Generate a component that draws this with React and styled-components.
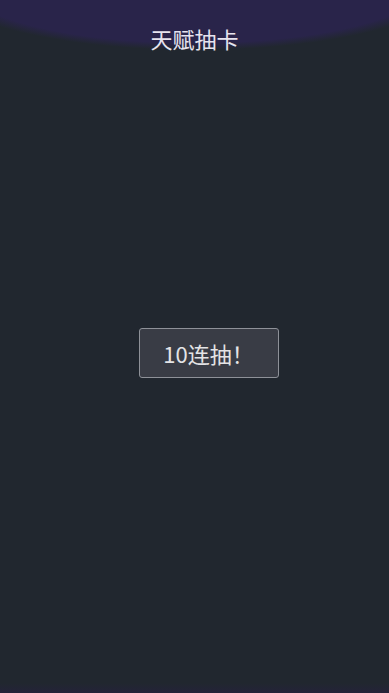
import styled, { createGlobalStyle } from 'styled-components';

const GlobalStyle = createGlobalStyle`
  html, body {
    margin: 0;
    padding: 0;
    height: 100%;
    background: #21272f;
  }
  #root {
    height: 100%;
  }
`;

const TalentDraw = () => {
  return (
    <S.Page>
      <GlobalStyle />
      <S.Header>
        <S.Title>天赋抽卡</S.Title>
      </S.Header>
      <S.Main>
        <S.DrawButton type="button">10连抽！</S.DrawButton>
      </S.Main>
    </S.Page>
  );
};

export default TalentDraw;

const S = {
  Page: styled.div`
    display: flex;
    flex-direction: column;
    min-height: 100vh;
    font-family: 'Noto Sans CJK SC', 'Noto Sans', sans-serif;
    background:
      radial-gradient(ellipse 262px 70px at 50% -20px, #29244a 90%, rgba(41, 36, 74, 0) 100%),
      linear-gradient(to top, #242339 0px, rgba(36, 35, 57, 0) 10px),
      #21272f;
  `,
  Header: styled.header`
    height: 78px;
    padding-top: 24px;
    box-sizing: border-box;
    display: flex;
    justify-content: center;
  `,
  Title: styled.h1`
    margin: 0;
    font-size: 22px;
    line-height: 28px;
    font-weight: 400;
    color: #e6e3ee;
  `,
  Main: styled.main`
    flex: 1;
    display: flex;
    align-items: center;
    justify-content: center;
    padding: 0 0 66px 28px;
  `,
  DrawButton: styled.button`
    width: 140px;
    height: 50px;
    padding: 0;
    background: #393c45;
    border: 1px solid #8e9198;
    border-radius: 3px;
    color: #e4e4e6;
    font-family: 'Noto Sans CJK SC', 'Noto Sans', sans-serif;
    font-size: 22px;
    cursor: pointer;
  `,
};
